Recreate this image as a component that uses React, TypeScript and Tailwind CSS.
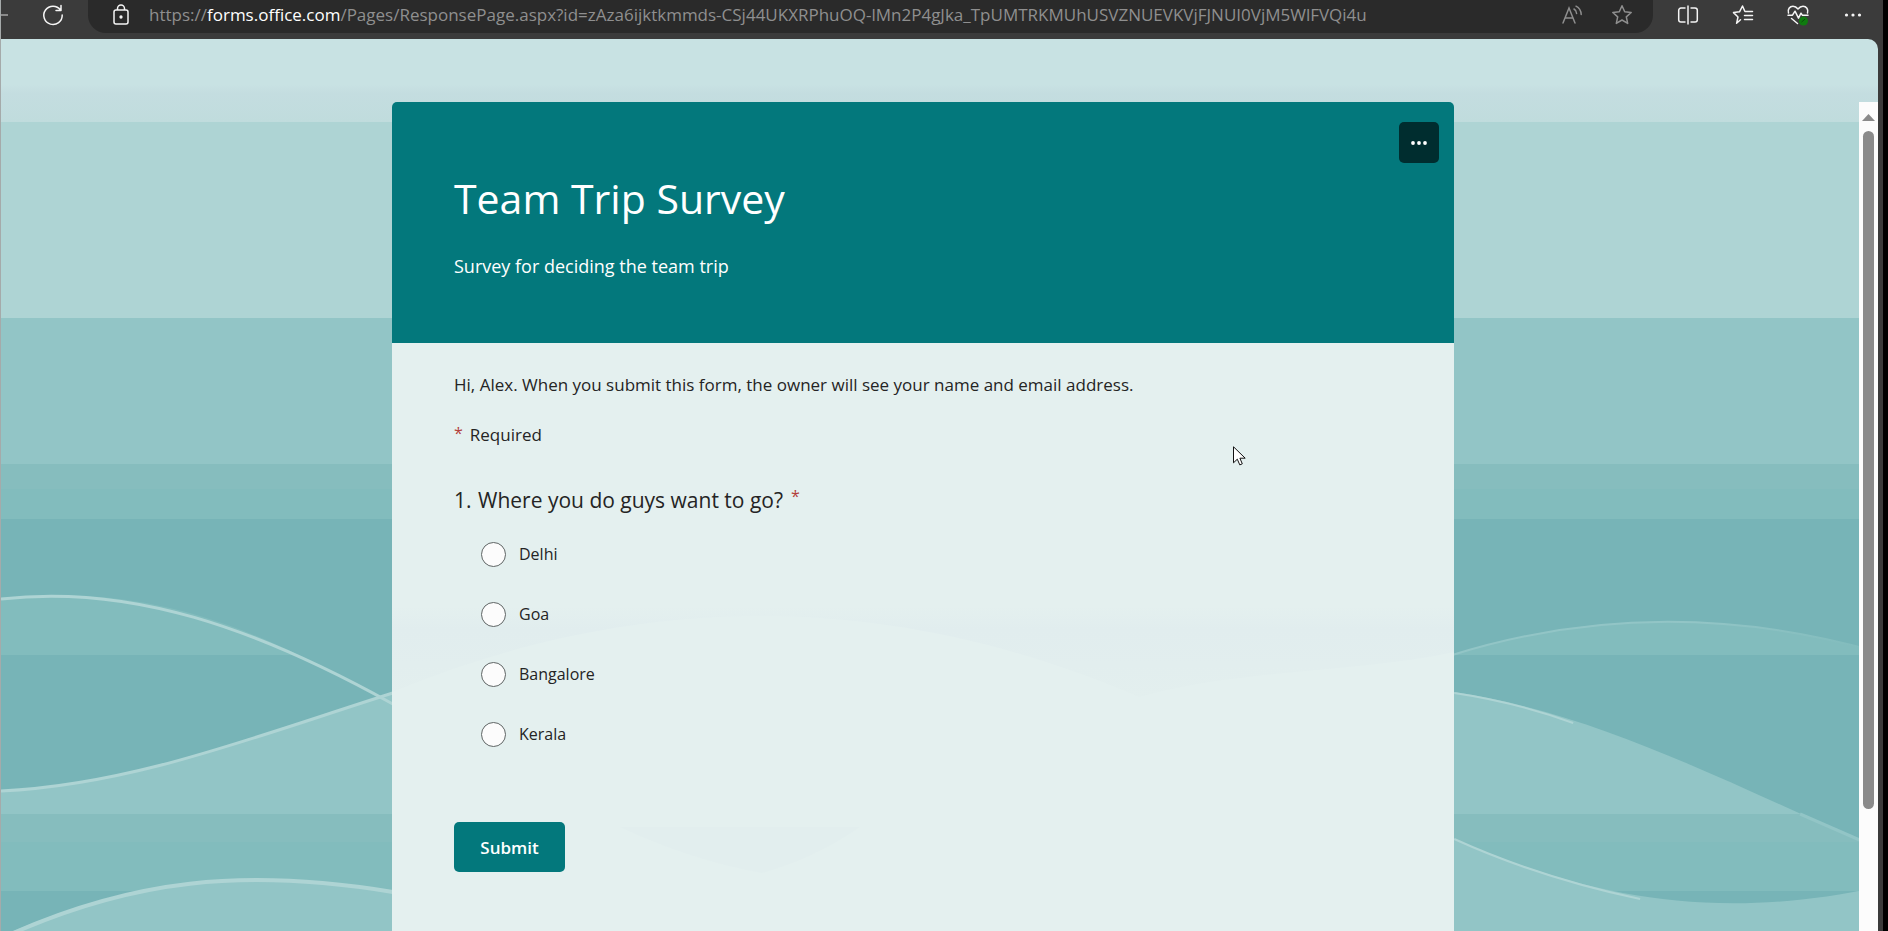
import React from "react";

const places = ["Delhi", "Goa", "Bangalore", "Kerala"];

function Waves() {
  return (
    <svg
      className="absolute inset-0 h-full w-full"
      viewBox="0 39 1878 892"
      preserveAspectRatio="none"
      aria-hidden="true"
    >
      <defs>
        <linearGradient id="sky" x1="0" y1="39" x2="0" y2="122" gradientUnits="userSpaceOnUse">
          <stop offset="0" stopColor="#c8e2e3" />
          <stop offset="0.55" stopColor="#c8e2e3" />
          <stop offset="0.65" stopColor="#c4dde0" />
          <stop offset="1" stopColor="#c0dcdd" />
        </linearGradient>
        <linearGradient id="crest" x1="1452" y1="0" x2="1860" y2="0" gradientUnits="userSpaceOnUse">
          <stop offset="0" stopColor="#92c5c6" />
          <stop offset="0.6" stopColor="#92c5c6" />
          <stop offset="1" stopColor="#82bcbd" />
        </linearGradient>
      </defs>
      <g shapeRendering="crispEdges">
        <rect x="0" y="39" width="1878" height="83" fill="url(#sky)" />
        <rect x="0" y="122" width="1878" height="196" fill="#aed4d4" />
        <rect x="0" y="318" width="1878" height="146" fill="#92c5c6" />
        <rect x="0" y="464" width="1878" height="25" fill="#86bdbe" />
        <rect x="0" y="489" width="1878" height="30" fill="#82bcbd" />
        <rect x="0" y="519" width="1878" height="412" fill="#77b4b7" />
      </g>
      <path d="M0 599 C100 588 190 603 298 655 H0 Z" fill="#82bcbd" />
      <path d="M1452 655 C1590 612 1730 610 1878 652 V655 Z" fill="#82bcbd" />
      <path d="M1452 655 C1590 612 1730 610 1878 652" fill="none" stroke="url(#crest)" strokeWidth="2" />
      <path
        d="M0 791 C130 785 250 738 392 692 H1454 C1600 714 1720 780 1878 848 V931 H0 Z"
        fill="#92c5c6"
      />
      <path d="M0 814 H1801 Q1830 827 1878 848 V892 H0 Z" fill="#86bdbe" />
      <path d="M0 842 H1866 L1878 848 V892 H0 Z" fill="#82bcbd" />
      <path d="M0 891 H1878 V931 H0 Z" fill="#77b4b7" />
      <path
        d="M10 932 C130 881 240 867 392 892 V860 L1454 839 C1570 889 1700 926 1878 887 V931 Z"
        fill="#92c5c6"
      />
      <g fill="none" stroke="#aed4d4" strokeWidth="3">
        <path d="M0 599 C130 584 255 628 392 704" />
        <path d="M0 791 C130 785 250 738 392 693" />
        <path d="M10 934 C130 881 240 867 392 892" strokeWidth="4" />
        <path d="M1454 693 Q1515 702 1573 723" strokeWidth="2" />
        <path d="M1454 839 Q1540 878 1640 899" strokeWidth="2" />
      </g>
      <path d="M1800 814 L1878 848" stroke="#92c5c6" strokeWidth="3" />
    </svg>
  );
}

function CardShade() {
  return (
    <svg
      className="absolute inset-0 h-full w-full"
      viewBox="392 343 1062 588"
      preserveAspectRatio="none"
      aria-hidden="true"
    >
      <defs>
        <linearGradient id="shade" x1="0" y1="606" x2="0" y2="700" gradientUnits="userSpaceOnUse">
          <stop offset="0" stopColor="#e4f0ef" />
          <stop offset="0.25" stopColor="#e1edee" />
          <stop offset="1" stopColor="#e3efee" />
        </linearGradient>
      </defs>
      <path
        d="M392 606 H1454 V652 C1390 666 1320 668 1240 678 Q1190 683 1139 697 C890 590 640 590 392 692 Z"
        fill="url(#shade)"
      />
      <path d="M620 827 H860 Q815 858 762 873 Q690 860 620 827 Z" fill="#e2eeee" />
    </svg>
  );
}

function EdgeBar() {
  const outer = "flex w-[55px] items-center justify-center text-[#f5f5f5]";
  const inner = "flex w-[50px] items-center justify-center text-[#8f8f8f]";
  return (
    <header className="flex h-[39px] items-start pr-[3px]">
      <nav className="flex h-[33px] w-[87px] shrink-0 items-center pb-[3px]" aria-label="Navigation">
        <span className="h-[2px] w-[7px] bg-[#8a8a8a]" />
        <button type="button" aria-label="Refresh" className="ml-[33px]">
          <svg width="24" height="24" viewBox="0 0 24 24" fill="none" stroke="#f5f5f5" strokeWidth="1.5" strokeLinecap="round" strokeLinejoin="round">
            <path d="M19.500 7A9.200 9.200 0 1 0 21.200 12M20 2.500V7.500H15" />
          </svg>
        </button>
      </nav>
      <div className="flex h-[33px] min-w-0 flex-1 items-center rounded-b-[18px] bg-[#2a2a2a] pb-[3px] pl-[25px] pr-[6px]">
        <svg className="shrink-0" width="16" height="22" viewBox="0 0 16 22" fill="none" stroke="#f5f5f5" strokeWidth="1.500" aria-hidden="true">
          <rect x="1" y="6" width="14" height="14" rx="2" />
          <path d="M4.500 6V4.500a3.500 3.500 0 0 1 7 0V6" />
          <circle cx="8" cy="13" r="0.900" fill="#f5f5f5" />
        </svg>
        <p className="ml-5 min-w-0 flex-1 truncate text-[17px] leading-6 text-[#8f8f8f]">
          https://<span className="text-white">forms.office.com</span>
          /Pages/ResponsePage.aspx?id=zAza6ijktkmmds-CSj44UKXRPhuOQ-lMn2P4gJka_TpUMTRKMUhUSVZNUEVKVjFJNUI0VjM5WlFVQi4u
        </p>
        <button type="button" aria-label="Read aloud" className={inner}>
          <svg width="22" height="20" viewBox="0 0 22 20" fill="none" stroke="currentColor" strokeWidth="1.500" strokeLinecap="round">
            <path d="M2 18 8 3 14 18M4 13h8M13 4c1.700.9 2.500 2.300 2.600 4.500M15 1.200C18.500 3 20 5.600 20.200 9.500" />
          </svg>
        </button>
        <button type="button" aria-label="Add to favorites" className={inner}>
          <svg width="22" height="22" viewBox="0 0 22 22" fill="none" stroke="currentColor" strokeWidth="1.500" strokeLinejoin="round">
            <path d="m11 1.800 2.700 6 6.500.7-4.900 4.400 1.400 6.500L11 16l-5.700 3.400 1.400-6.500-4.900-4.400 6.500-.7z" />
          </svg>
        </button>
      </div>
      <div className="ml-[7px] flex h-[33px] shrink-0 pb-[3px]">
        <button type="button" aria-label="Split screen" className={outer}>
          <svg width="22" height="22" viewBox="0 0 22 22" fill="none" stroke="currentColor" strokeWidth="1.500">
            <path d="M8.500 4H4a2.300 2.300 0 0 0-2.300 2.300v9.400A2.300 2.300 0 0 0 4 18h4.500M13.500 4H18a2.300 2.300 0 0 1 2.300 2.300v9.400A2.300 2.300 0 0 1 18 18h-4.500M11 1.500v19" />
          </svg>
        </button>
        <button type="button" aria-label="Favorites" className={outer}>
          <svg width="22" height="22" viewBox="0 0 22 22" fill="none" stroke="currentColor" strokeWidth="1.500" strokeLinejoin="round" strokeLinecap="round">
            <path d="M8.500 15.800 4.600 19.300 6 13 1.500 8.600l6-.8L10.500 2l2.300 5.200M13 7.500h7.500M12.500 11.500h8M12.500 15.500h8" />
          </svg>
        </button>
        <button type="button" aria-label="Browser essentials" className={outer}>
          <svg width="24" height="24" viewBox="0 0 24 24" fill="none" stroke="currentColor" strokeWidth="1.500" strokeLinejoin="round" strokeLinecap="round">
            <path d="M2.500 10C1.300 6.500 3.700 3.200 7 3.200c2 0 3.600 1 5 2.800 1.400-1.800 3-2.800 5-2.800 3.300 0 5.700 3.300 4.500 6.800M2 12.200h4.500l2.500-4 3.500 7 2.500-5 1.300 2H22M5.500 15.500l6 5" />
            <circle cx="17.500" cy="18" r="4.500" fill="#0f7b0f" stroke="none" />
            <path d="m15.800 18.800 3-2.500" stroke="#0a4d0a" strokeWidth="1" />
          </svg>
        </button>
        <button type="button" aria-label="Settings and more" className={outer}>
          <svg width="18" height="6" viewBox="0 0 18 6" fill="currentColor">
            <circle cx="2.500" cy="3" r="1.600" />
            <circle cx="9" cy="3" r="1.600" />
            <circle cx="15.500" cy="3" r="1.600" />
          </svg>
        </button>
      </div>
    </header>
  );
}

function Required() {
  return <span className="text-[16px] leading-[20px] text-[#b3403a]">*</span>;
}

function SurveyCard() {
  return (
    <main className="flex w-full max-w-[1062px] flex-col overflow-hidden rounded-t-[5px]">
      <header className="flex items-start justify-between bg-[#03787c] pt-5 pr-[15px] pb-[63px] pl-[62px] text-white">
        <div className="pt-12">
          <h1 className="text-[41px] leading-[56px]">Team Trip Survey</h1>
          <p className="mt-[26px] text-[18px] leading-[28px]">Survey for deciding the team trip</p>
        </div>
        <button
          type="button"
          aria-label="More options"
          className="flex h-[41px] w-[40px] items-center justify-center rounded-[5px] bg-[#002d2f]"
        >
          <svg width="18" height="6" viewBox="0 0 18 6" fill="#ffffff" aria-hidden="true">
            <circle cx="3" cy="3" r="1.900" />
            <circle cx="9" cy="3" r="1.900" />
            <circle cx="15" cy="3" r="1.900" />
          </svg>
        </button>
      </header>
      <div className="relative flex-1 bg-[#e4f0ef]">
        <CardShade />
        <form className="relative px-[62px] pt-[30px] pb-[59px]" onSubmit={(e) => e.preventDefault()}>
          <p className="text-[17px] leading-6">
            Hi, Alex. When you submit this form, the owner will see your name and email address.
          </p>
          <p className="mt-[26px] flex gap-[7px] text-[17px] leading-6">
            <Required /> Required
          </p>
          <div role="radiogroup" aria-labelledby="question">
            <h2 id="question" className="mt-[39px] flex text-[21px] leading-[28px]">
              <span className="w-6">1.</span>
              <span className="mr-2">Where you do guys want to go?</span>
              <Required />
            </h2>
            <div className="mt-[10px] pl-[27px]">
              {places.map((place) => (
                <label key={place} className="flex h-[60px] items-center gap-[13px] text-[16px] leading-6">
                  <input
                    type="radio"
                    name="destination"
                    value={place}
                    className="size-[25px] appearance-none rounded-full border border-[#5f6565] bg-[#fcfcfc] checked:border-[7px] checked:border-[#03787c]"
                  />
                  {place}
                </label>
              ))}
            </div>
          </div>
          <button
            type="submit"
            className="mt-[58px] h-[50px] w-[111px] rounded-[5px] bg-[#03787c] pt-[2px] text-[17px] font-semibold text-white"
          >
            Submit
          </button>
        </form>
      </div>
    </main>
  );
}

function Scrollbar() {
  return (
    <div className="relative mt-[63px] flex w-[19px] shrink-0 flex-col items-center bg-[#fcfcfc] pt-3" aria-hidden="true">
      <svg width="13" height="7" viewBox="0 0 13 7" fill="#8a8a8a">
        <path d="M6.500 0 13 7H0Z" />
      </svg>
      <div className="mt-[10px] h-[83%] w-[11px] rounded-full bg-[#8a8a8a]" />
    </div>
  );
}

export default function App() {
  return (
    <div className="relative flex min-h-screen flex-col border-r-[5px] border-l border-r-black border-l-[#a5aaaa] bg-[#3b3b3b] font-['Open_Sans','Noto_Sans',sans-serif] text-[#242424]">
      <EdgeBar />
      <div className="relative mr-[5px] flex flex-1 overflow-hidden rounded-tr-[10px]">
        <Waves />
        <div className="relative flex min-w-0 flex-1 justify-center pt-[63px] pr-[14px]">
          <SurveyCard />
        </div>
        <Scrollbar />
      </div>
      <svg
        className="absolute top-[446px] left-[1232px]"
        width="14"
        height="21"
        viewBox="0 0 14 21"
        fill="#ffffff"
        stroke="#111111"
        strokeWidth="1"
        aria-hidden="true"
      >
        <path d="M.5.800V16.800L4.300 13.200 6.800 18.900 9.300 17.800 6.900 12.200H12.200Z" />
      </svg>
    </div>
  );
}
